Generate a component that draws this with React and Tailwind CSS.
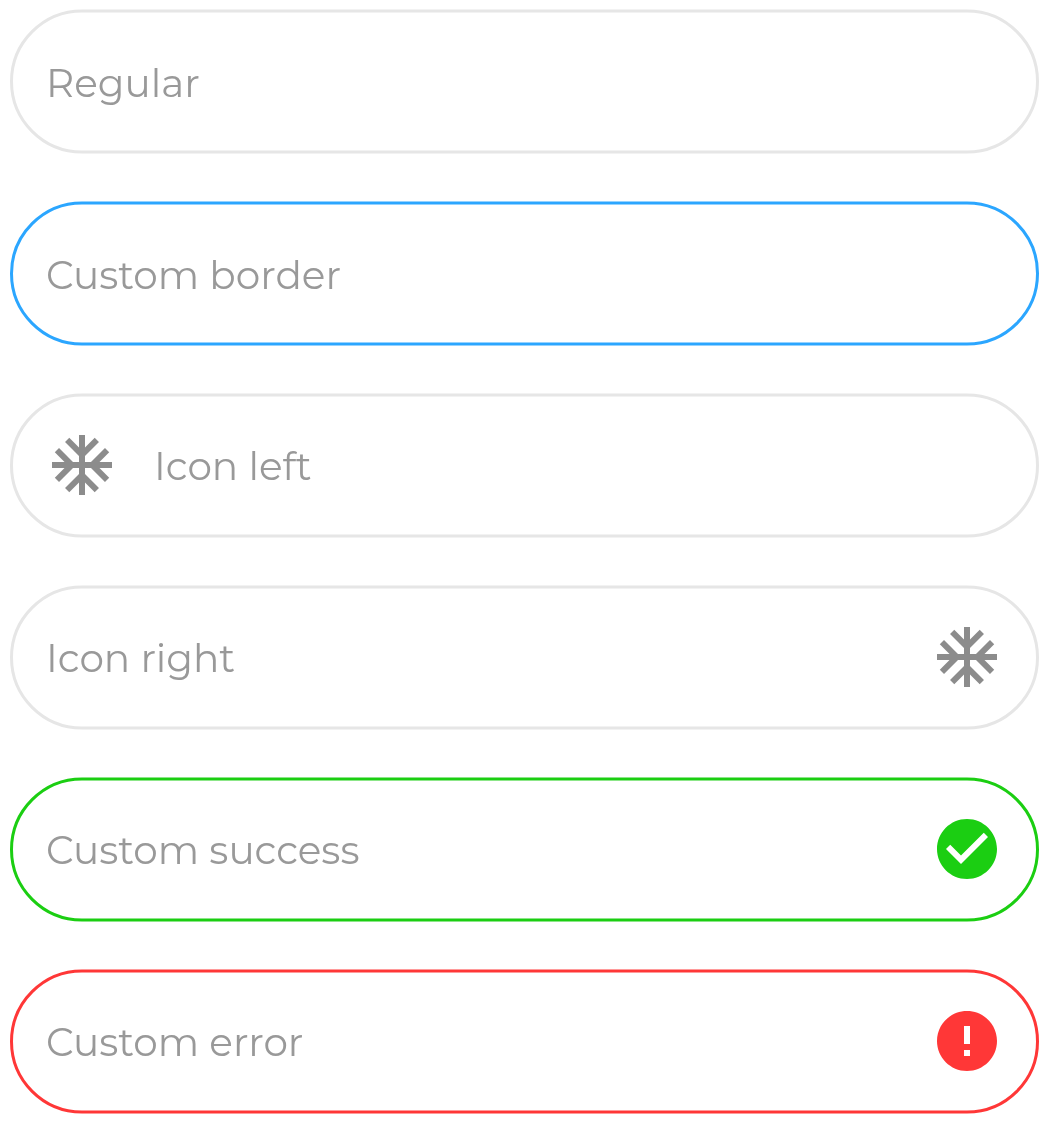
import { MdAcUnit, MdCheckCircle, MdError } from "react-icons/md";

function Field({ label, border = "border-[#e6e6e6]", labelOffset = "mb-px", left, right }) {
  return (
    <div className={`flex h-36 w-[1029px] -translate-y-[0.5px] items-center rounded-full border-[3px] pr-[33px] pl-[33px] ${border}`}>
      {left && <span className="mr-9 mb-px -translate-y-[0.5px]">{left}</span>}
      <span className={`flex-1 font-['Montserrat','Inter',sans-serif] text-[39px] leading-[48px] whitespace-nowrap text-[#999999] will-change-transform ${labelOffset}`}>
        {label}
      </span>
      {right && <span className="mb-px -translate-y-[0.5px]">{right}</span>}
    </div>
  );
}

export default function App() {
  return (
    <main className="flex h-[1130px] w-[1056px] flex-col gap-12 bg-white pt-2.5 pl-2.5">
      <Field label="Regular" labelOffset="mt-px" />
      <Field label="Custom border" border="border-[#2ba6ff]" labelOffset="mt-px" />
      <Field label="Icon left" left={<MdAcUnit className="size-[72px] text-[#8c8c8c]" />} />
      <Field label="Icon right" right={<MdAcUnit className="size-[72px] text-[#8c8c8c]" />} />
      <Field
        label="Custom success"
        border="border-[#1bce12]"
        right={<MdCheckCircle className="size-[72px] text-[#1bce12]" />}
      />
      <Field
        label="Custom error"
        border="border-[#ff3737]"
        right={<MdError className="size-[72px] text-[#ff3737]" />}
      />
    </main>
  );
}
